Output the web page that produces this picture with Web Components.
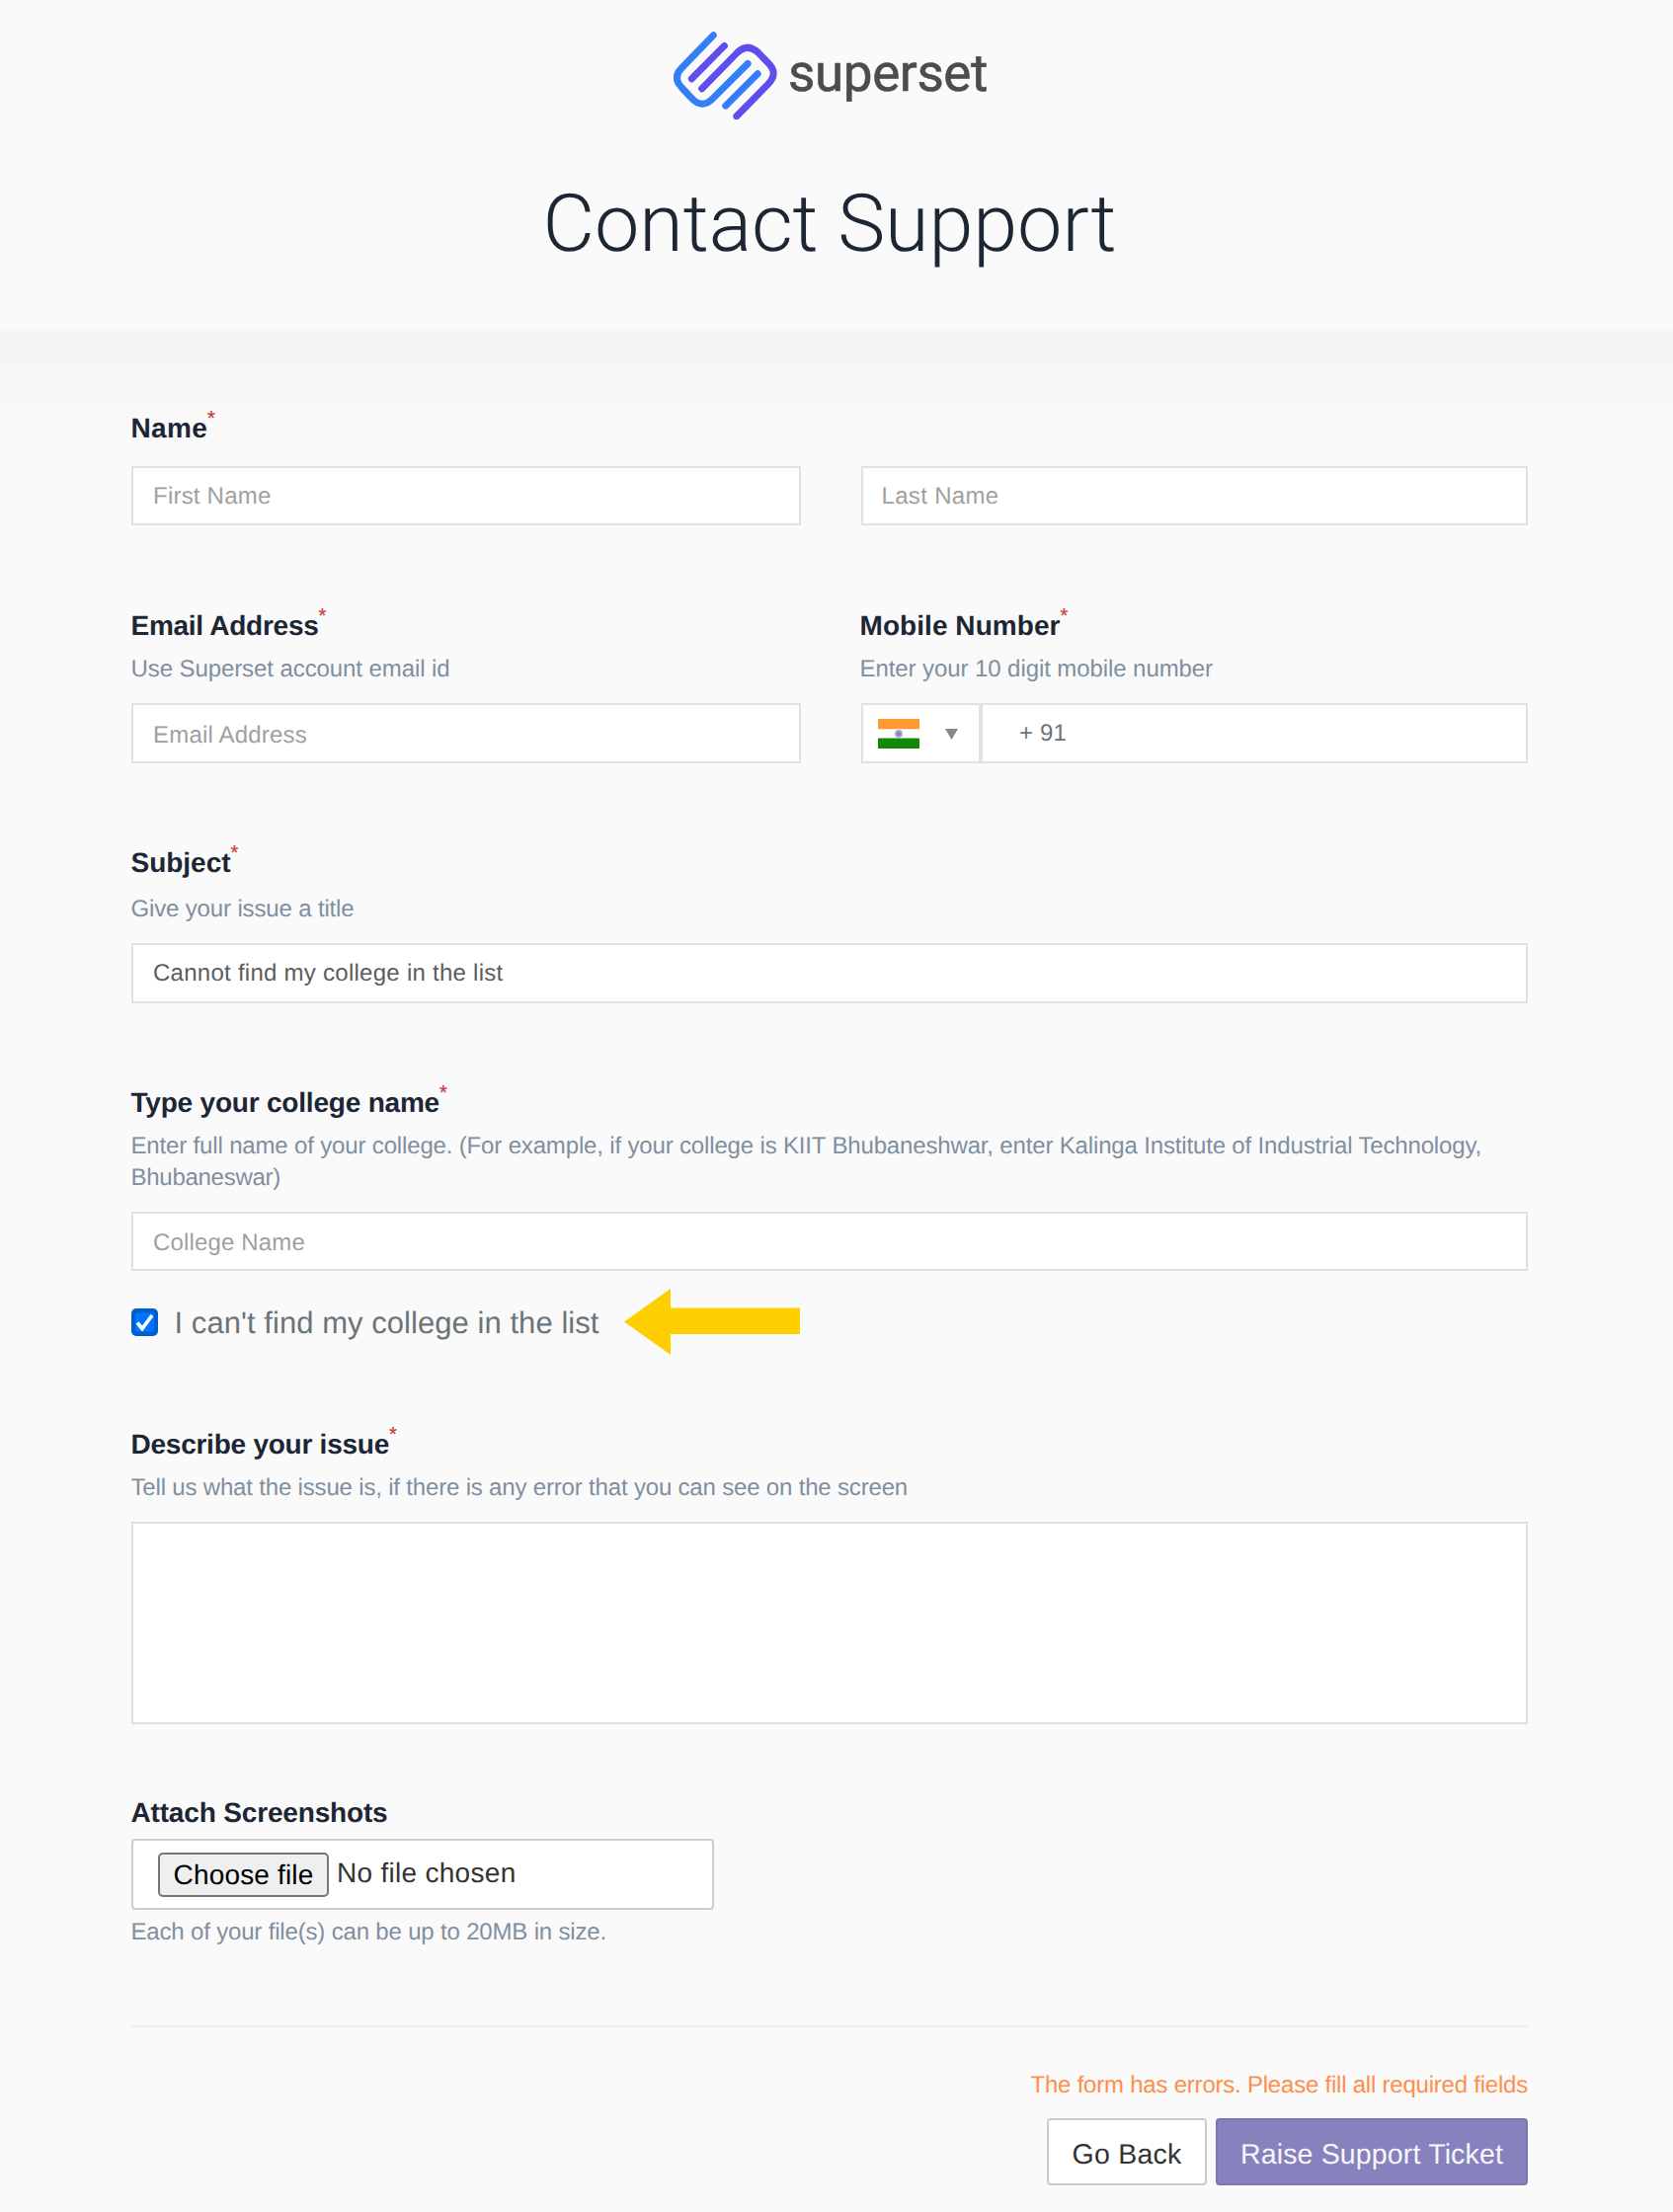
<!DOCTYPE html>
<html lang="en">
<head>
<meta charset="utf-8">
<title>Contact Support</title>
<style>
body{margin:0;background:#fafafa;font-family:"Liberation Sans",Arial,sans-serif;color:#1c2634;text-rendering:geometricPrecision}
</style>
</head>
<body>
<support-page></support-page>
<script>
const define = (name, html, ready) => {
  const tpl = document.createElement('template');
  tpl.innerHTML = html;
  customElements.define(name, class extends HTMLElement {
    constructor() {
      super();
      this.attachShadow({mode: 'open'}).append(tpl.content.cloneNode(true));
    }
    connectedCallback() { if (ready) ready(this, this.shadowRoot); }
  });
};

define('brand-logo', `<style>
:host{display:flex;align-items:flex-start;height:90px}
svg{display:block;width:104.5px;height:89.5px;flex:none}
.word{font:400 53px/60px Roboto,sans-serif;color:#4c4c4c;margin:12.500px 0 0 11.500px;-webkit-text-stroke:.6px #4c4c4c}
</style>
<svg viewBox="65 35 313 268" fill="none" stroke-width="21" stroke-linecap="round">
<g stroke="#347ff6"><path d="M186 46L90 145Q60 175 90 205L118 235Q151 273 186 236L290 132"/><path d="M320 163L223 260"/></g>
<g stroke="#5f4eee"><path d="M219 78L120 178"/><path d="M151 208L258 99Q290 68 322 99L352 130Q384 161 352 194L256 292"/></g>
</svg><div class="word"><fit-text w="202">superset</fit-text></div>`);

define('page-header', `<style>
:host{display:flex;flex-direction:column;align-items:center;box-sizing:border-box;height:333px;padding:31.5px 12px 0 0}
h1{font:300 81px/100px Roboto,sans-serif;margin:55px 2px 0 0;color:#1c2634}
</style><brand-logo></brand-logo><h1><fit-text w="581">Contact Support</fit-text></h1>`);

define('field-label', `<style>
:host{display:flex;height:30px;margin-left:-.5px;font:700 28px/32px "Liberation Sans",Arial,sans-serif;color:#1c2634}
i{font:400 20px/20px "Liberation Sans",Arial,sans-serif;color:#c8423c;margin:-4px 0 0 0;height:20px;-webkit-text-stroke:.3px #c8423c}
:host(:not([required])) i{display:none}
</style><slot></slot><i>*</i>`);

define('field-hint', `<style>
:host{display:flex;flex-direction:column;align-items:flex-start;margin-left:-.5px;padding-top:1px;font-size:24px;line-height:31px;color:#7f8f9f}
</style><slot></slot>`);

define('text-box', `<style>
:host{display:flex;box-sizing:border-box;height:61px;border:2px solid #e1e1e1;background:#fff;padding:13px 20px 0;font-size:24px;line-height:34px;color:#a0a0a0}
:host([filled]){color:#5c5c5c}
</style><slot></slot>`);

define('phone-box', `<style>
:host{display:flex;box-sizing:border-box;height:61px;border:2px solid #e1e1e1;background:#fff;color:#6b7478;font-size:24px}
.cc{display:flex;align-items:center;box-sizing:border-box;width:121px;border-right:4px solid #e1e1e1;padding-left:15px}
.flag{width:42px;height:30px}.tri{width:13px;height:11px;margin:2px 0 0 26px}
.num{line-height:34px;padding:12px 0 0 37px}
</style>
<div class="cc"><svg class="flag" viewBox="0 0 42 30"><path fill="#fff" d="M0 0h42v30H0z"/><path fill="#ff9933" d="M0 0h42v10H0z"/><path fill="#ffdfbd" d="M0 10h42v1H0z"/><path fill="#92c892" d="M0 19h42v1H0z"/><path fill="#138808" d="M0 20h42v10H0z"/><circle cx="21" cy="15" r="4" fill="#a9a8dc"/><circle cx="21" cy="15" r="2.2" fill="#8583cb"/></svg>
<svg class="tri" viewBox="0 0 13 11"><path fill="#888" d="M0 0h13L6.500 11z"/></svg></div>
<div class="num"><fit-text w="48">+ 91</fit-text></div>`);

define('check-row', `<style>
:host{display:flex;align-items:center;height:67px;font-size:31px;line-height:40px;color:#6b7478}
.box{width:27px;height:28px;flex:none}.txt{margin:2px 25px 0 16.500px;height:40px}
.arrow{width:178px;height:67px;flex:none}
</style>
<svg class="box" viewBox="0 0 27 28"><rect width="27" height="28" rx="5" fill="#005fcc"/><rect x="4" y="4.500" width="19" height="19" rx="2" fill="#0075ff"/><path d="M6 14.500l5 6L21 7" fill="none" stroke="#fff" stroke-width="3.600"/></svg>
<div class="txt"><slot></slot></div>
<svg class="arrow" viewBox="0 0 178 67"><path fill="#ffce00" d="M0 33.500L47 0V19.500H178V46H47V67z"/></svg>`);

define('file-picker', `<style>
:host{display:flex;align-items:center;box-sizing:border-box;width:590px;height:72px;border:2px solid #ccc;border-radius:4px;background:#fff;padding-left:24.500px;font-size:28px;line-height:32px;color:#333}
.btn{box-sizing:border-box;width:173px;height:45px;border:2px solid #767676;border-radius:5px;background:#efefef;color:#000;padding:5px 0 0 14px;margin-right:8.500px}
.none{margin-top:-2px}
</style><div class="btn"><fit-text w="142">Choose file</fit-text></div><div class="none"><fit-text w="181.500">No file chosen</fit-text></div>`);

define('action-button', `<style>
:host{display:flex;justify-content:center;box-sizing:border-box;height:68px;width:162px;border:2px solid #ccc;border-radius:4px;background:#fff;color:#333;font-size:28.500px;line-height:32px;padding-top:18.500px}
:host([primary]){width:316px;background:#8782be;border-color:#7b75b0;color:#f7f6fc}
</style><slot></slot>`);

define('support-form', `<style>
:host{display:flex;flex-direction:column;box-sizing:border-box;height:1907px;padding:85px 147px 0 133px;background:linear-gradient(#f4f4f4 0,#f4f4f4 10px,#fafafa 115px)}
section{display:flex;flex-direction:column;margin-bottom:85px}
.row{display:flex;flex-direction:row;gap:61px}
.col{display:flex;flex-direction:column;width:678px}
.col + .col{width:675px}
field-hint{margin-top:13px;margin-bottom:19px}
.buttons{display:flex;justify-content:flex-end;gap:9px}
.err{display:flex;justify-content:flex-end;font-size:24px;line-height:31px;color:#ff8e4c;margin-bottom:18px;padding-top:43px;border-top:2px solid #eee}
</style>
<section style="margin-bottom:86px">
  <field-label required><fit-text w="77.600">Name</fit-text></field-label>
  <div class="row" style="margin-top:24px">
    <div class="col"><text-box style="height:60px;padding-top:12px"><fit-text w="119.500">First Name</fit-text></text-box></div>
    <div class="col"><text-box style="height:60px;padding-top:12px;padding-left:18.500px"><fit-text w="119">Last Name</fit-text></text-box></div>
  </div>
</section>
<section class="row">
  <div class="col">
    <field-label required><fit-text w="190">Email Address</fit-text></field-label>
    <field-hint><fit-text w="323">Use Superset account email id</fit-text></field-hint>
    <text-box style="padding-top:14px"><fit-text w="156">Email Address</fit-text></text-box>
  </div>
  <div class="col">
    <field-label required style="margin-left:-1.500px"><fit-text w="203">Mobile Number</fit-text></field-label>
    <field-hint style="margin-left:-1.500px"><fit-text w="357.500">Enter your 10 digit mobile number</fit-text></field-hint>
    <phone-box></phone-box>
  </div>
</section>
<section>
  <field-label required><fit-text w="101">Subject</fit-text></field-label>
  <field-hint style="margin-top:16px"><fit-text w="226">Give your issue a title</fit-text></field-hint>
  <text-box filled style="padding-top:12px"><fit-text w="354.500">Cannot find my college in the list</fit-text></text-box>
</section>
<section style="margin-bottom:75px">
  <field-label required><fit-text w="312.500">Type your college name</fit-text></field-label>
  <field-hint style="line-height:31.500px"><fit-text w="1367.500">Enter full name of your college. (For example, if your college is KIIT Bhubaneshwar, enter Kalinga Institute of Industrial Technology,</fit-text><fit-text w="151.500">Bhubaneswar)</fit-text></field-hint>
  <text-box style="height:60px"><fit-text w="154">College Name</fit-text></text-box>
  <check-row style="margin-top:18px"><fit-text w="430">I can't find my college in the list</fit-text></check-row>
</section>
<section style="margin-bottom:74px">
  <field-label required><fit-text w="261.500">Describe your issue</fit-text></field-label>
  <field-hint><fit-text w="786.500">Tell us what the issue is, if there is any error that you can see on the screen</fit-text></field-hint>
  <text-box style="height:205px"></text-box>
</section>
<section style="margin-bottom:79px">
  <field-label><fit-text w="260">Attach Screenshots</fit-text></field-label>
  <file-picker style="margin-top:12px"></file-picker>
  <field-hint style="margin:6px 0 0 -.500px"><fit-text w="481.500">Each of your file(s) can be up to 20MB in size.</fit-text></field-hint>
</section>
<div class="err"><fit-text w="503.500">The form has errors. Please fill all required fields</fit-text></div>
<div class="buttons"><action-button><fit-text w="111">Go Back</fit-text></action-button><action-button primary><fit-text w="266">Raise Support Ticket</fit-text></action-button></div>`);

define('support-page', `<style>:host{display:block;height:2240px;overflow:hidden}</style><page-header></page-header><support-form></support-form>`);

/* One line of text tracked so that its advance equals the "w" attribute. */
define('fit-text', `<style>:host{display:inline-block;flex:none;white-space:nowrap}</style><slot></slot>`, el => {
  const w = parseFloat(el.getAttribute('w'));
  el.style.letterSpacing = '0px';
  const natural = el.getBoundingClientRect().width;
  el.style.letterSpacing = ((w - natural) / el.textContent.length).toFixed(4) + 'px';
});
</script>
</body>
</html>
